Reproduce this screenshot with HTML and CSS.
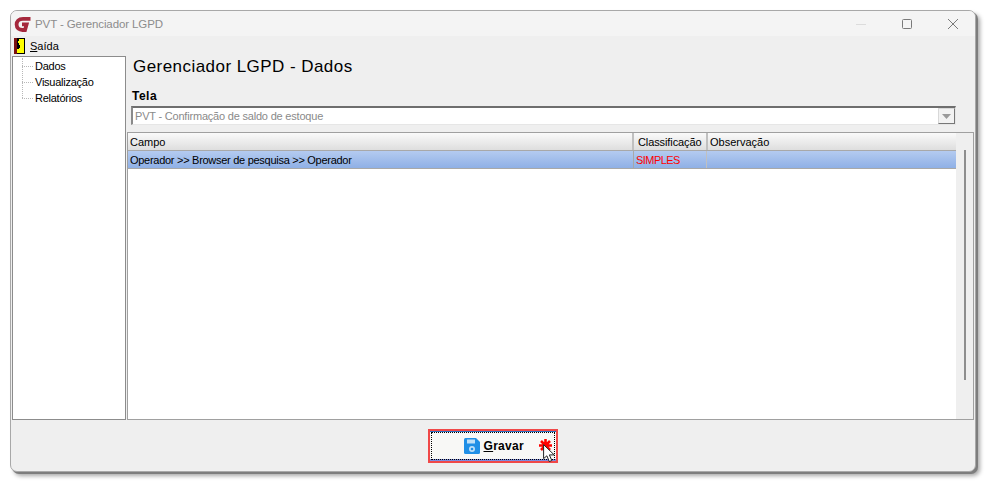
FILE: index.html
```html
<!DOCTYPE html>
<html lang="pt-BR">
<head>
<meta charset="utf-8">
<title>PVT - Gerenciador LGPD</title>
<link rel="stylesheet" href="styles.css">
</head>
<body>
<div class="window">
  <header class="titlebar">
    <svg class="logo" width="18" height="18" viewBox="0 0 18 18">
      <path d="M16.5 3.8 H9 C4.6 3.8 2.6 6.5 2.6 9.5 C2.6 13.2 5.2 15 8.5 15 H11 L12.6 9.4 H8" fill="none" stroke="#a5283c" stroke-width="3.8"/>
    </svg>
    <span class="title">PVT - Gerenciador LGPD</span>
    <div class="controls">
      <svg width="12" height="12" viewBox="0 0 12 12"><path d="M1 6.5H11" stroke="#dcdcdc" fill="none"/></svg>
      <svg width="12" height="12" viewBox="0 0 12 12"><rect x="1.5" y="1.5" width="9" height="9" rx="1" stroke="#7a7a7a" fill="none"/></svg>
      <svg width="12" height="12" viewBox="0 0 12 12"><path d="M1 1L11 11M11 1L1 11" stroke="#7a7a7a" fill="none"/></svg>
    </div>
  </header>
  <nav class="menubar">
    <svg width="11" height="16" viewBox="0 0 11 16">
      <rect width="11" height="16" fill="#000"/>
      <rect x="0" y="0" width="3" height="16" fill="#7a1010"/>
      <rect x="5" y="1" width="5" height="14" fill="#ffff00"/>
      <rect x="3" y="11" width="7" height="4" fill="#ffff00"/>
      <rect x="4" y="3" width="2" height="2" fill="#ffff00"/>
      <rect x="5" y="7" width="1" height="3" fill="#000"/>
    </svg>
    <span class="menu-item"><u>S</u>aída</span>
  </nav>
  <main class="main">
    <aside class="tree">
      <div class="tree-item">Dados</div>
      <div class="tree-item">Visualização</div>
      <div class="tree-item">Relatórios</div>
    </aside>
    <section class="content">
      <h1 class="heading">Gerenciador LGPD - Dados</h1>
      <label class="label">Tela</label>
      <div class="combo">
        <span class="combo-text">PVT - Confirmação de saldo de estoque</span>
        <span class="combo-btn"><svg width="9" height="5" viewBox="0 0 9 5"><path d="M0 0H9L4.5 5Z" fill="#9a9a9a"/></svg></span>
      </div>
      <div class="grid">
        <div class="table">
          <div class="row head">
            <div class="cell c1">Campo</div>
            <div class="cell c2">Classificação</div>
            <div class="cell c3">Observação</div>
          </div>
          <div class="row selected">
            <div class="cell c1">Operador &gt;&gt; Browser de pesquisa &gt;&gt; Operador</div>
            <div class="cell c2 red">SIMPLES</div>
            <div class="cell c3"></div>
          </div>
        </div>
        <div class="scrollbar"><div class="thumb"></div></div>
      </div>
    </section>
  </main>
  <footer class="footer">
    <div class="btn-outline">
      <button class="btn">
        <svg width="16" height="16" viewBox="0 0 16 16">
          <path d="M0 1.5Q0 0 1.5 0H12L16 4V14.5Q16 16 14.5 16H1.5Q0 16 0 14.5Z" fill="#1f8fe6"/>
          <rect x="3" y="1.5" width="8" height="4" fill="#bfe0f8"/>
          <circle cx="8" cy="11" r="3" fill="#bfe0f8"/>
          <circle cx="8" cy="11" r="1.3" fill="#1f8fe6"/>
        </svg>
        <span class="btn-label"><u>G</u>ravar</span>
        <svg class="star" width="13" height="13" viewBox="0 0 13 13">
          <path d="M6.5 0V13M0 6.5H13M2 2L11 11M11 2L2 11" stroke="#ff0000" stroke-width="2.6"/>
        </svg>
      </button>
      <svg class="cursor" width="13" height="19" viewBox="0 0 13 19">
        <path d="M0.6 0.6V14.6L3.9 11.8L6.3 17.6L8.8 16.5L6.4 10.9H11.2Z" fill="#fff" stroke="#222" stroke-width="1" stroke-linejoin="round"/>
      </svg>
    </div>
  </footer>
</div>
</body>
</html>
```
FILE: styles.css
```css
* { box-sizing: border-box; }
html, body { margin: 0; height: 100%; background: #fff; overflow: hidden; }
body {
  padding: 10px 11px 11px 10px;
  font-family: "Liberation Sans", Arial, sans-serif;
  font-size: 11px;
  color: #000;
}
.window {
  height: 462px;
  display: flex;
  flex-direction: column;
  background: #efefef;
  border: 1px solid #a8a8a8;
  border-radius: 7px;
  box-shadow: 2px 2px 0 #7d7d7d, 4px 4px 4px rgba(0,0,0,.35);
  overflow: hidden;
}
.titlebar {
  height: 25px;
  display: flex;
  align-items: center;
  background: #f4f4f4;
  padding-left: 3px;
  flex: none;
}
.logo { flex: none; }
.title { margin-left: 3px; font-size: 11.5px; letter-spacing: -.1px; color: #8c8c8c; }
.controls {
  margin-left: auto;
  display: flex;
  align-items: center;
  gap: 34px;
  padding-right: 16px;
}
.menubar {
  height: 20px;
  display: flex;
  align-items: center;
  gap: 5px;
  padding-left: 3px;
  flex: none;
}
.menu-item { font-size: 11px; }
.main { flex: none; height: 364px; display: flex; padding-left: 1px; }
.tree {
  width: 114px;
  height: 364px;
  background: #fff;
  border: 1px solid #8c8c8c;
  padding: 1px 0 0 22px;
  flex: none;
}
.tree-item { position: relative; height: 16px; line-height: 16px; letter-spacing: -.25px; }
.tree-item::before {
  content: "";
  position: absolute;
  left: -13px;
  top: 8px;
  width: 11px;
  border-top: 1px dotted #b8b8b8;
}
.tree-item::after {
  content: "";
  position: absolute;
  left: -13px;
  top: -8px;
  height: 16px;
  border-left: 1px dotted #b8b8b8;
}
.tree-item:first-child::after { top: 0; height: 8px; }
.content { flex: 1; display: flex; flex-direction: column; padding-left: 1px; min-width: 0; }
.heading {
  margin: 0;
  padding: 0 0 0 6px;
  height: 33px;
  line-height: 22px;
  font-size: 17px;
  font-weight: 400;
  letter-spacing: .45px;
}
.label { padding-left: 5px; height: 17px; line-height: 14px; font-size: 12px; font-weight: 700; letter-spacing: .5px; }
.combo {
  margin-left: 4px;
  width: 825px;
  height: 19px;
  display: flex;
  align-items: center;
  background: #fff;
  border-top: 2px solid #6e6e6e;
  border-left: 2px solid #8a8a8a;
  border-bottom: 1px solid #e6e6e6;
  border-right: 1px solid #e6e6e6;
  padding-left: 2px;
}
.combo-text { color: #8a8a8a; letter-spacing: -.2px; }
.combo-btn {
  margin-left: auto;
  width: 17px;
  height: 16px;
  display: flex;
  align-items: center;
  justify-content: center;
  background: #f2f2f2;
  border: 1px solid #d8d8d8;
  border-right-color: #777;
  border-bottom-color: #777;
}
.grid {
  margin-top: 7px;
  width: 847px;
  height: 288px;
  display: flex;
  background: #fff;
  border: 1px solid #a0a0a0;
}
.table { width: 828px; flex: none; }
.row { display: flex; }
.head {
  height: 18px;
  background: linear-gradient(#fafafa, #dedede);
  border-bottom: 1px solid #a8a8a8;
}
.selected {
  height: 18px;
  background: linear-gradient(#b4cbf0, #8fb0e6);
  border-bottom: 1px solid #a8a8a8;
}
.cell {
  line-height: 18px;
  padding-left: 2px;
  white-space: nowrap;
  border-right: 2px solid #c0c0c0;
}
.selected .c1 { letter-spacing: -.28px; }
.c1 { width: 506px; }
.c2 { width: 74px; padding-left: 4px; letter-spacing: -.1px; }
.c3 { flex: 1; border-right: 0; }
.selected .cell { border-right-width: 1px; }
.selected .c1 { border-right: 0; }
.selected .c2 { border-left: 1px solid #a8a8a8; width: 74px; margin-left: -1px; padding-left: 2px; }
.selected .c3 { border-right: 0; }
.red { color: #ff0000; letter-spacing: -.55px; }
.scrollbar { flex: 1; background: #efefef; display: flex; justify-content: center; }
.thumb { margin-top: 17px; width: 2px; height: 230px; background: #8e8e8e; }
.footer { flex: 1; display: flex; justify-content: center; padding-top: 9px; }
.btn-outline {
  position: relative;
  width: 130px;
  height: 34px;
  border: 2px solid #f04848;
  margin-right: 1px;
}
.btn {
  width: 100%;
  height: 100%;
  display: flex;
  align-items: center;
  padding: 0 0 0 34px;
  background: #f8f8f6;
  border: 0;
  border-top: 1px solid #2a6fc0;
  border-bottom: 2px solid #7c8ce0;
  outline: 1px dotted #000;
  outline-offset: -2px;
  font: inherit;
}
.btn-label {
  margin-left: 4px;
  font-size: 12px;
  font-weight: 700;
  letter-spacing: .3px;
}
.star { margin-left: 15px; }
.cursor { position: absolute; left: 113px; top: 13px; }
```
